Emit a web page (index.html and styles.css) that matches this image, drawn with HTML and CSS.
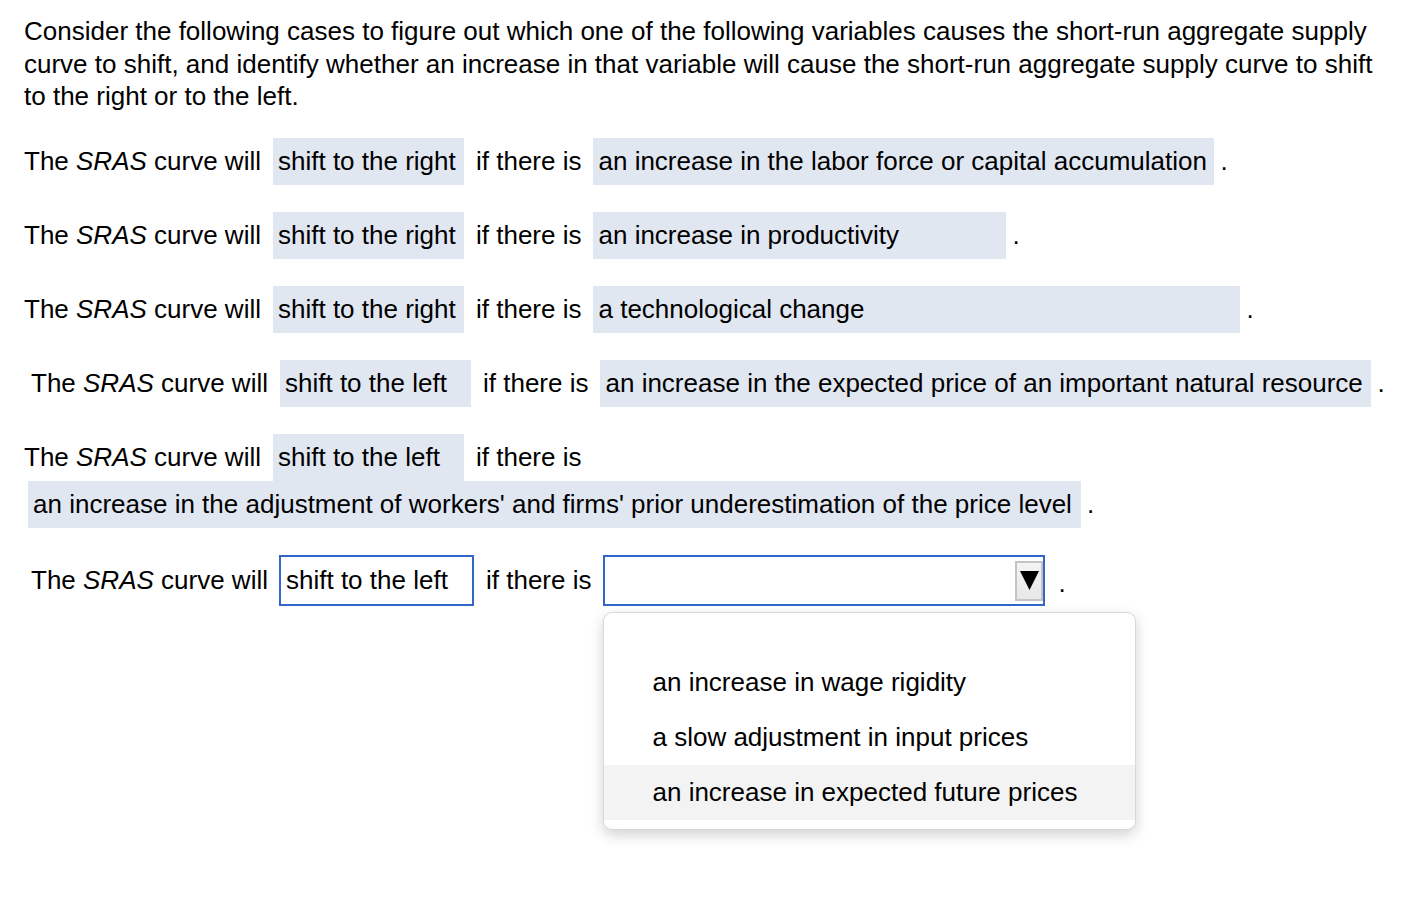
FILE: index.html
```html
<!DOCTYPE html>
<html>
<head>
<meta charset="utf-8">
<link rel="stylesheet" href="styles.css">
</head>
<body>
<div class="page">
  <p class="intro">Consider the following cases to figure out which one of the following variables causes the short-run aggregate supply curve to shift, and identify whether an increase in that variable will cause the short-run aggregate supply curve to shift to the right or to the left.</p>

  <div class="row"><span class="lbl">The <i>SRAS</i> curve will</span><span class="blank b1">shift to the right</span><span class="lbl">if there is</span><span class="blank" style="width:621px">an increase in the labor force or capital accumulation</span><span class="dot">.</span></div>

  <div class="row"><span class="lbl">The <i>SRAS</i> curve will</span><span class="blank b1">shift to the right</span><span class="lbl">if there is</span><span class="blank" style="width:413px">an increase in productivity</span><span class="dot">.</span></div>

  <div class="row"><span class="lbl">The <i>SRAS</i> curve will</span><span class="blank b1">shift to the right</span><span class="lbl">if there is</span><span class="blank" style="width:647px">a technological change</span><span class="dot">.</span></div>

  <div class="row indent"><span class="lbl">The <i>SRAS</i> curve will</span><span class="blank b1">shift to the left</span><span class="lbl">if there is</span><span class="blank" style="width:771px">an increase in the expected price of an important natural resource</span><span class="dot">.</span></div>

  <div class="row"><span class="lbl">The <i>SRAS</i> curve will</span><span class="blank b1">shift to the left</span><span class="lbl">if there is</span> <span class="blank wrapped" style="width:1053px">an increase in the adjustment of workers' and firms' prior underestimation of the price level</span><span class="dot">.</span></div>

  <div class="row indent last"><span class="lbl">The <i>SRAS</i> curve will</span><span class="sel s1">shift to the left</span><span class="lbl">if there is</span><span class="sel s2"><span class="arrow"><svg width="19" height="19" viewBox="0 0 19 19"><polygon points="0,0 19,0 9.5,19" fill="#000"/></svg></span><span class="menu"><span class="opt empty"></span><span class="opt">an increase in wage rigidity</span><span class="opt">a slow adjustment in input prices</span><span class="opt hover">an increase in expected future prices</span></span></span><span class="dot dot-sel">.</span></div>
</div>
</body>
</html>
```

FILE: styles.css
```css
html, body {
  margin: 0;
  padding: 0;
  background: #ffffff;
}

body {
  min-height: 902px;
}

.page {
  padding: 15px 24px 260px 24px;
  font-family: "Liberation Sans", Arial, Helvetica, sans-serif;
  font-size: 26px;
  color: #000000;
}

.intro {
  margin: 0 0 25px 0;
  max-width: 1360px;
  line-height: 32.5px;
}

.row {
  line-height: 47px;
  margin-bottom: 27px;
}

.row.indent {
  padding-left: 7px;
}

.lbl {
  display: inline-block;
  vertical-align: top;
  height: 47px;
}

.blank {
  display: inline-block;
  vertical-align: top;
  box-sizing: border-box;
  height: 47px;
  line-height: 47px;
  padding: 0 5px;
  margin: 0 12px;
  background: #e1e7f1;
  white-space: nowrap;
}

.blank.b1 {
  width: 191px;
}

.blank.wrapped {
  margin-left: 4px;
}

.dot {
  display: inline-block;
  vertical-align: top;
  margin-left: -6px;
}

.row.last {
  line-height: 51px;
}

.row.last .lbl {
  height: 51px;
}

.sel {
  display: inline-block;
  vertical-align: top;
  box-sizing: border-box;
  height: 51px;
  line-height: 47px;
  border: 2px solid #3465c8;
  padding: 0 5px;
  background: #ffffff;
  white-space: nowrap;
  position: relative;
}

.sel.s1 {
  width: 195px;
  margin: 0 12px 0 11px;
}

.sel.s2 {
  width: 442px;
  margin: 0 12px 0 12px;
}

.dot-sel {
  margin-left: 1px;
  line-height: 56px;
}

.arrow {
  position: absolute;
  right: 0;
  top: 4px;
  width: 28px;
  height: 40px;
  box-sizing: border-box;
  background: linear-gradient(#f4f4f4, #e8e8e8);
  border: 2px solid #c4c4c4;
  display: flex;
  align-items: center;
  justify-content: center;
}

.arrow svg {
  display: block;
}

.menu {
  position: absolute;
  left: -2px;
  top: 55px;
  width: 533px;
  box-sizing: border-box;
  background: #ffffff;
  border: 1px solid #d9d9d9;
  border-radius: 9px;
  box-shadow: 0 5px 14px rgba(0, 0, 0, 0.18);
  padding: 10px 0 9px 0;
  display: flex;
  flex-direction: column;
  z-index: 5;
}

.opt {
  display: block;
  height: 55px;
  line-height: 55px;
  padding-left: 48px;
}

.opt.empty {
  height: 32px;
}

.opt.hover {
  background: #f3f3f3;
}
```
